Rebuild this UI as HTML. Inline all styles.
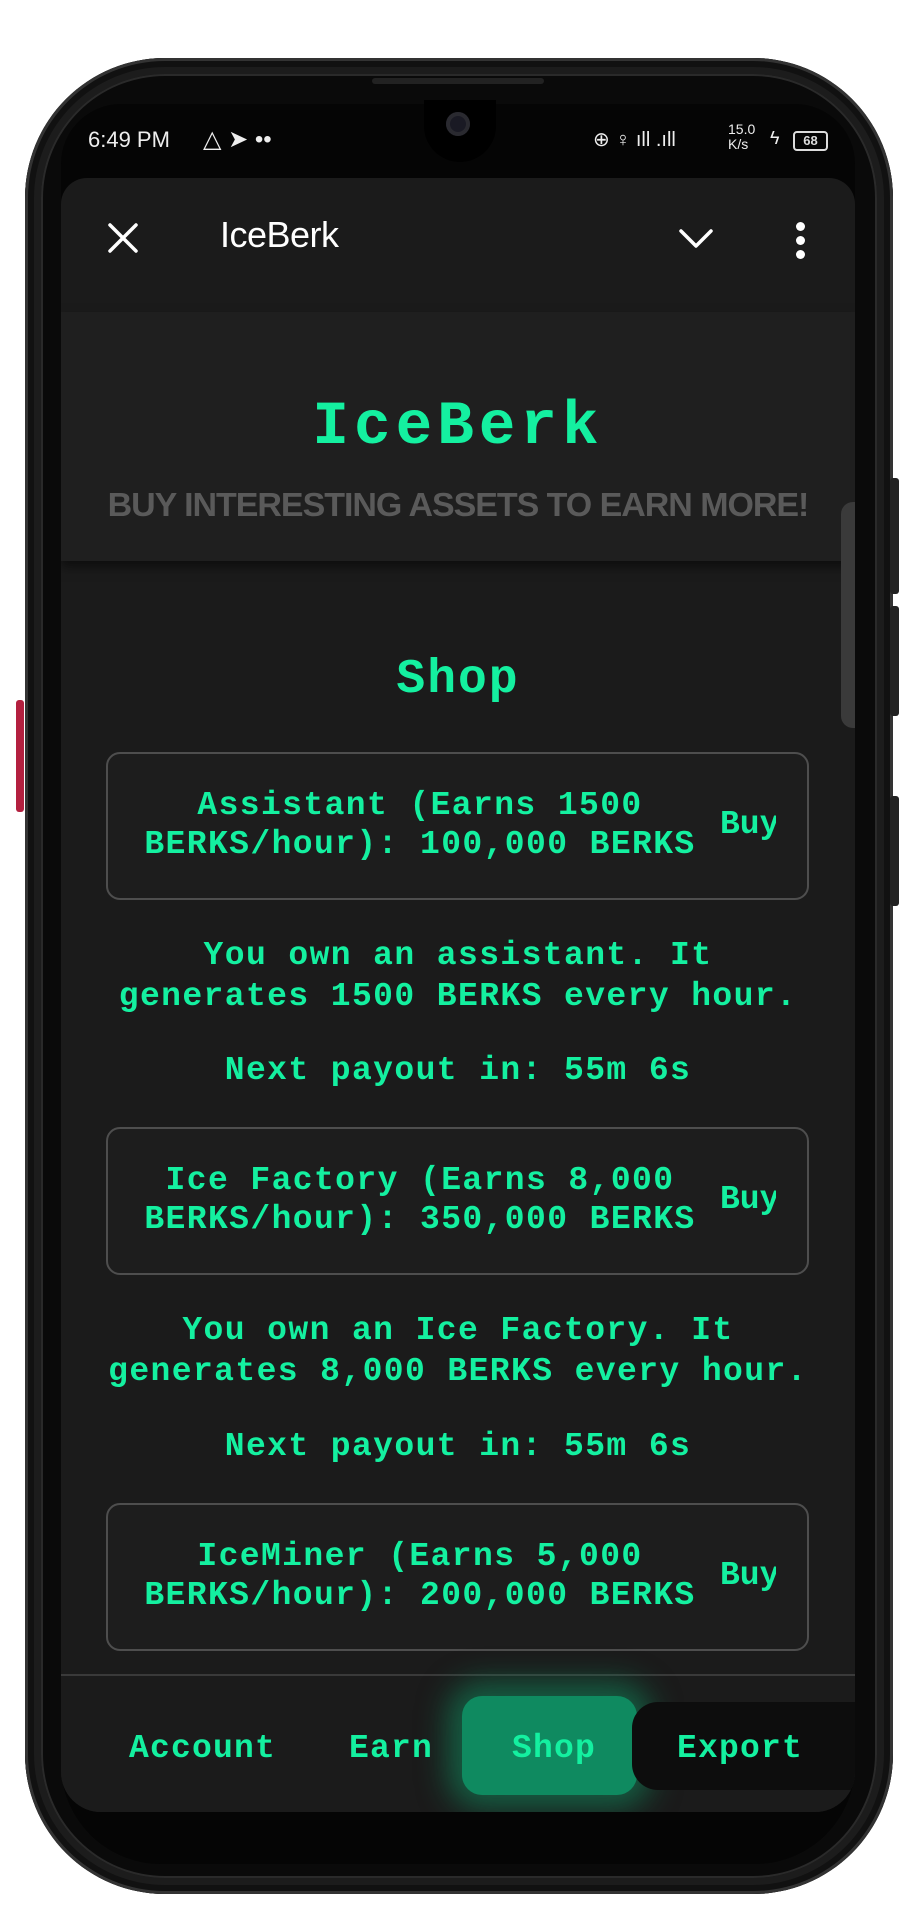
<!DOCTYPE html>
<html><head><meta charset="utf-8">
<style>
*{margin:0;padding:0;box-sizing:border-box}
body{width:916px;height:1920px;background:#fff;position:relative;overflow:hidden;font-family:"Liberation Mono",monospace}
.abs{position:absolute}
.phone{left:25px;top:58px;width:868px;height:1836px;border-radius:140px;background:#1c1c1c;box-shadow:inset 0 0 0 3px #333,inset 0 0 0 9px #111}
.bezel{left:41px;top:74px;width:836px;height:1804px;border-radius:124px;background:#0a0a0a;box-shadow:inset 0 0 0 2px #2a2a2a}
.screen{left:61px;top:104px;width:794px;height:1760px;border-radius:60px 60px 100px 100px;background:#050505;overflow:hidden}
.g{color:#14f0a0}
.status{color:#eee;font-family:"Liberation Sans",sans-serif;font-size:22px}
.app{left:61px;top:178px;width:794px;height:1634px;background:#1b1b1b;border-radius:26px 26px 40px 40px;overflow:hidden}
.card{position:absolute;left:45px;width:703px;height:148px;border:2px solid #4e4e4e;border-radius:14px;background:#1d1d1d;overflow:hidden}
.ct{position:absolute;left:12px;width:600px;text-align:center;font-size:33px;font-weight:bold;letter-spacing:1.4px;line-height:39px;color:#14f0a0}
.buy{position:absolute;left:612px;font-size:33px;font-weight:bold;color:#14f0a0;width:56px;overflow:hidden;white-space:nowrap}
.t{position:absolute;left:0;width:794px;text-align:center;font-size:33px;font-weight:bold;letter-spacing:1.4px;line-height:41px;color:#14f0a0;white-space:nowrap}
.nav{position:absolute;top:1552px;font-size:33px;font-weight:bold;letter-spacing:1.2px;color:#14f0a0}
</style></head><body>
<div class="abs phone"></div>
<div class="abs" style="left:890px;top:478px;width:9px;height:116px;background:#222;border-radius:3px"></div>
<div class="abs" style="left:890px;top:606px;width:9px;height:110px;background:#222;border-radius:3px"></div>
<div class="abs" style="left:890px;top:796px;width:9px;height:110px;background:#222;border-radius:3px"></div>
<div class="abs" style="left:16px;top:700px;width:8px;height:112px;background:#b3203f;border-radius:3px"></div>
<div class="abs bezel"></div>
<div class="abs" style="left:372px;top:78px;width:172px;height:6px;border-radius:3px;background:#222"></div>
<div class="abs screen"></div>
<div class="abs" style="left:424px;top:100px;width:72px;height:62px;background:#000;border-radius:0 0 36px 36px"></div>
<div class="abs" style="left:446px;top:112px;width:24px;height:24px;border-radius:50%;background:#1a1a24;box-shadow:inset 0 0 0 4px #2a2a30"></div>
<div class="abs status" style="left:88px;top:127px">6:49 PM</div>
<div class="abs status" style="left:203px;top:125px;font-size:24px">△ ➤ ••</div>
<div class="abs status" style="left:593px;top:127px;font-size:20px">⊕ ♀ ıll .ıll</div>
<div class="abs status" style="left:728px;top:122px;font-size:14px;line-height:15px">15.0<br>K/s</div>
<div class="abs status" style="left:770px;top:128px;font-size:18px">ϟ</div>
<div class="abs" style="left:793px;top:131px;width:35px;height:20px;border:2px solid #ddd;border-radius:4px;color:#ddd;font:bold 13px 'Liberation Sans',sans-serif;text-align:center;line-height:16px">68</div>

<div class="abs app">
  <svg class="abs" style="left:46px;top:44px" width="32" height="32" viewBox="0 0 32 32"><path d="M3 3L29 29M29 3L3 29" stroke="#fff" stroke-width="3.5" stroke-linecap="round"/></svg>
  <div class="abs" style="left:159px;top:36px;color:#fff;font:36px 'Liberation Sans',sans-serif;letter-spacing:-0.5px">IceBerk</div>
  <svg class="abs" style="left:617px;top:50px" width="36" height="22" viewBox="0 0 36 22"><path d="M3 3L18 18L33 3" stroke="#fff" stroke-width="3.5" fill="none" stroke-linecap="round" stroke-linejoin="round"/></svg>
  <div class="abs" style="left:735px;top:44px;width:9px;height:9px;border-radius:50%;background:#fff;box-shadow:0 14px 0 #fff,0 28px 0 #fff"></div>
  <div class="abs" style="left:0;top:134px;width:794px;height:249px;background:#1f1f1f;box-shadow:0 6px 10px rgba(0,0,0,.5)"></div>
  <div class="abs g" style="left:0;width:794px;text-align:center;top:210px;font-size:61px;font-weight:bold;letter-spacing:5px;line-height:80px">IceBerk</div>
  <div class="abs" style="left:0;width:794px;text-align:center;top:308px;font:bold 33px 'Liberation Sans',sans-serif;color:#5a5a5a;letter-spacing:-1px;transform:scaleX(1.03)">BUY INTERESTING ASSETS TO EARN MORE!</div>
  <div class="abs" style="left:780px;top:324px;width:18px;height:226px;background:#3a3a3a;border-radius:12px 0 0 12px"></div>
  <div class="abs g" style="left:0;width:794px;text-align:center;top:476px;font-size:48px;font-weight:bold;line-height:52px;letter-spacing:2px">Shop</div>

  <div class="card" style="top:574px"><div class="ct" style="top:32px">Assistant (Earns 1500<br>BERKS/hour): 100,000 BERKS</div><div class="buy" style="top:52px">Buy</div></div>
  <div class="t" style="top:757px">You own an assistant. It<br>generates 1500 BERKS every hour.</div>
  <div class="t" style="top:872px">Next payout in: 55m 6s</div>

  <div class="card" style="top:949px"><div class="ct" style="top:32px">Ice Factory (Earns 8,000<br>BERKS/hour): 350,000 BERKS</div><div class="buy" style="top:52px">Buy</div></div>
  <div class="t" style="top:1132px">You own an Ice Factory. It<br>generates 8,000 BERKS every hour.</div>
  <div class="t" style="top:1248px">Next payout in: 55m 6s</div>

  <div class="card" style="top:1325px"><div class="ct" style="top:32px">IceMiner (Earns 5,000<br>BERKS/hour): 200,000 BERKS</div><div class="buy" style="top:52px">Buy</div></div>

  <div class="abs" style="left:0;top:1496px;width:794px;height:140px;background:#1b1b1b;border-top:2px solid #3a3a3a"></div>
  <div class="abs" style="left:401px;top:1518px;width:175px;height:99px;border-radius:20px;background:#0f8a60;box-shadow:0 0 30px 14px rgba(16,150,100,.55)"></div>
  <div class="abs" style="left:571px;top:1524px;width:230px;height:88px;border-radius:26px 0 0 26px;background:#0d0d0d"></div>
  <div class="nav" style="left:68px">Account</div>
  <div class="nav" style="left:288px">Earn</div>
  <div class="nav" style="left:451px">Shop</div>
  <div class="nav" style="left:616px">Export</div>
</div>
</body></html>
